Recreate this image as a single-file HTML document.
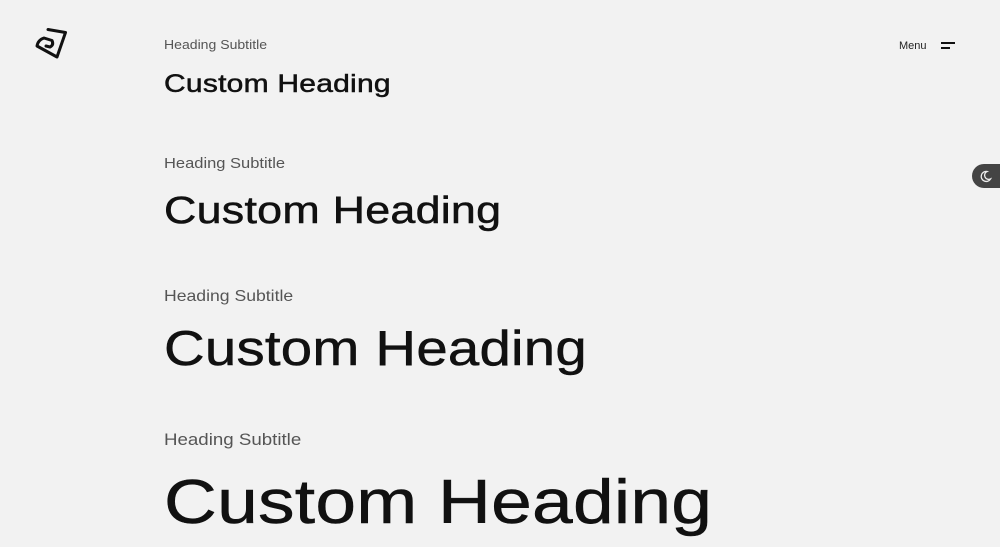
<!DOCTYPE html>
<html><head><style>
html,body{margin:0;padding:0;width:1000px;height:547px;overflow:hidden;background:#f2f2f2;font-family:"Liberation Sans",sans-serif;color:#111}
.t{position:absolute;left:164px;white-space:nowrap;transform-origin:left center;line-height:1}
.s{color:#555}
.h{font-weight:500;letter-spacing:0.2px;-webkit-text-stroke:0.5px #111}
</style></head><body>
<svg style="position:absolute;left:0;top:0" width="80" height="70" viewBox="0 0 80 70">
<path d="M48 29.5 L65.5 32.5 L57 57 L37 46 Q38 40 44 38 L52 40.5 Q54 45 50 47 L46 46" fill="none" stroke="#111" stroke-width="3" stroke-linejoin="round" stroke-linecap="round"/>
</svg>
<div class="t s" style="top:38px;font-size:13px;transform:scaleX(1.08)">Heading Subtitle</div>
<div class="t h" style="top:72px;font-size:25px;transform:scaleX(1.2)">Custom Heading</div>
<div class="t s" style="top:156px;font-size:15px;transform:scaleX(1.1)">Heading Subtitle</div>
<div class="t h" style="top:192px;font-size:38px;transform:scaleX(1.18)">Custom Heading</div>
<div class="t s" style="top:289px;font-size:16px;transform:scaleX(1.1)">Heading Subtitle</div>
<div class="t h" style="top:325px;font-size:49px;transform:scaleX(1.15)">Custom Heading</div>
<div class="t s" style="top:431px;font-size:17px;transform:scaleX(1.1)">Heading Subtitle</div>
<div class="t h" style="top:472px;font-size:62px;transform:scaleX(1.18)">Custom Heading</div>
<div style="position:absolute;left:899px;top:40px;font-size:11px;color:#222">Menu</div>
<div style="position:absolute;left:941px;top:42px;width:14px;height:1.5px;background:#111"></div>
<div style="position:absolute;left:941px;top:47px;width:9px;height:1.5px;background:#111"></div>
<div style="position:absolute;left:972px;top:164px;width:40px;height:24px;border-radius:12px;background:#444"></div>
<svg style="position:absolute;left:979px;top:169px" width="14" height="14" viewBox="0 0 14 14"><path d="M8 2.5 A5 5 0 1 0 11.5 10 A4 4 0 0 1 8 2.5Z" fill="none" stroke="#eee" stroke-width="1.3"/></svg>
</body></html>
